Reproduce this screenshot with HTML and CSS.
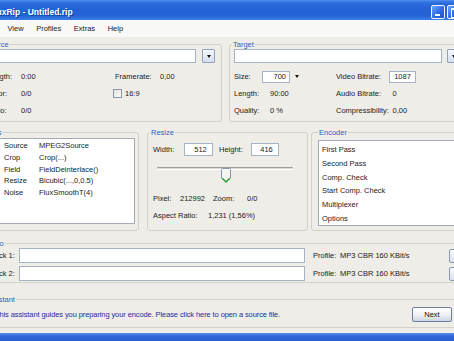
FILE: index.html
```html
<!DOCTYPE html>
<html>
<head>
<meta charset="utf-8">
<title>FluxRip - Untitled.rip</title>
<link rel="stylesheet" href="styles.css">
</head>
<body>
<div class="window">
  <div class="titlebar">
    <span class="title">FluxRip - Untitled.rip</span>
    <div class="caption-btns">
      <span class="cbtn cbtn-min"></span>
      <span class="cbtn cbtn-max"></span>
      <span class="cbtn cbtn-close"></span>
    </div>
  </div>
  <div class="menubar">
    <span class="menu">File</span>
    <span class="menu">View</span>
    <span class="menu">Profiles</span>
    <span class="menu">Extras</span>
    <span class="menu">Help</span>
  </div>
  <div class="client">
    <div class="row row-top">
      <fieldset class="group g-source">
        <legend class="lg-source">Source</legend>
        <div class="pathline">
          <input class="field f-path-src" type="text" value="" readonly>
          <span class="combo-btn"><i class="tri"></i></span>
        </div>
        <div class="info info-source">
          <span>Length:</span><span>0:00</span><span>Framerate:</span><span>0,00</span>
          <span>Color:</span><span>0/0</span><span class="chk-cell"><i class="chk"></i>16:9</span>
          <span>Ratio:</span><span>0/0</span><span></span><span></span>
        </div>
      </fieldset>
      <fieldset class="group g-target">
        <legend class="lg-target">Target</legend>
        <div class="pathline">
          <input class="field f-path-tgt" type="text" value="" readonly>
          <span class="combo-btn combo-tgt"><i class="tri"></i></span>
        </div>
        <div class="info info-target">
          <span>Size:</span><span class="size-cell"><input class="field f-size" type="text" value="700" readonly><i class="tri tri-loose"></i></span><span>Video Bitrate:</span><span><input class="field f-vbr" type="text" value="1087" readonly></span>
          <span>Length:</span><span class="v-pad">90:00</span><span>Audio Bitrate:</span><span class="v-pad2">0</span>
          <span>Quality:</span><span class="v-pad">0 %</span><span>Compressibility:</span><span class="v-pad2">0,00</span>
        </div>
      </fieldset>
    </div>

    <div class="row row-mid">
      <fieldset class="group g-filters">
        <legend class="lg-filters">Filters</legend>
        <div class="listbox filter-list">
          <span>Source</span><span>MPEG2Source</span>
          <span>Crop</span><span>Crop(...)</span>
          <span>Field</span><span>FieldDeinterlace()</span>
          <span>Resize</span><span>Bicubic(...,0,0.5)</span>
          <span>Noise</span><span>FluxSmoothT(4)</span>
        </div>
      </fieldset>
      <fieldset class="group g-resize">
        <legend class="lg-resize">Resize</legend>
        <div class="wh-row">
          <span class="wh-w">Width:</span>
          <input class="field f-w" type="text" value="512" readonly>
          <span class="wh-h">Height:</span>
          <input class="field f-h" type="text" value="416" readonly>
        </div>
        <div class="slider">
          <div class="track"></div>
          <svg class="thumb" width="10" height="15" viewBox="0 0 10 15">
            <path d="M0.5 1.5 Q0.5 0.5 1.5 0.5 H8.5 Q9.5 0.5 9.5 1.5 V10 L5 14.5 L0.5 10 Z" fill="#f3f3ef" stroke="#8796a8"/>
            <path d="M1.5 1.5 H8.5" stroke="#ffffff" stroke-width="1"/>
            <path d="M1.3 10.3 L5 13.8 L8.7 10.3" fill="none" stroke="#2ca42c" stroke-width="1.2"/>
          </svg>
        </div>
        <div class="stats">
          <div class="stat-row">
            <span class="s-pix">Pixel:</span><span class="s-pixv">212992</span><span class="s-zoom">Zoom:</span><span>0/0</span>
          </div>
          <div class="stat-row">
            <span class="s-ar">Aspect Ratio:</span><span>1,231 (1,56%)</span>
          </div>
        </div>
      </fieldset>
      <fieldset class="group g-encoder">
        <legend class="lg-encoder">Encoder</legend>
        <div class="listbox enc-list">
          <span>First Pass</span>
          <span>Second Pass</span>
          <span>Comp. Check</span>
          <span>Start Comp. Check</span>
          <span>Multiplexer</span>
          <span>Options</span>
        </div>
      </fieldset>
    </div>

    <fieldset class="group g-audio">
      <legend class="lg-audio">Audio</legend>
      <div class="track-row">
        <span class="t-label">Track 1:</span>
        <input class="field f-track" type="text" value="" readonly>
        <span class="t-prof">Profile:</span>
        <span class="t-profv">MP3 CBR 160 KBit/s</span>
        <span class="small-btn"></span>
      </div>
      <div class="track-row track-row2">
        <span class="t-label">Track 2:</span>
        <input class="field f-track" type="text" value="" readonly>
        <span class="t-prof">Profile:</span>
        <span class="t-profv">MP3 CBR 160 KBit/s</span>
        <span class="small-btn"></span>
      </div>
    </fieldset>

    <fieldset class="group g-assist">
      <legend class="lg-assist">Assistant</legend>
      <div class="assist-row">
        <span class="assist-text">This assistant guides you preparing your encode. Please click here to open a source file.</span>
        <span class="next-btn">Next</span>
      </div>
    </fieldset>
  </div>
  <div class="bottombar"></div>
</div>
</body>
</html>
```

FILE: styles.css
```css
* { box-sizing: border-box; }
html, body { margin: 0; padding: 0; }
body {
  width: 454px;
  height: 341px;
  overflow: hidden;
  background: #eeede8;
  font-family: "Liberation Sans", Arial, sans-serif;
  font-size: 7.5px;
  line-height: 1;
  color: #1b1b1b;
}
.window {
  width: 497px;
  height: 341px;
  margin-left: -24px;
  display: flex;
  flex-direction: column;
  overflow: hidden;
  background: #eeede8;
}

/* title bar */
.titlebar {
  flex: none;
  height: 20px;
  display: flex;
  align-items: flex-start;
  background: linear-gradient(#4f8ff2 0%, #2c6ddf 14%, #2360d5 50%, #2464d8 78%, #3b7ee6 100%);
}
.title {
  padding-left: 13px;
  padding-top: 1.5px;
  line-height: 20px;
  font-size: 8.5px;
  font-weight: bold;
  color: #fff;
  text-shadow: 1px 1px 0 #0d3d99;
}
.caption-btns {
  margin-left: auto;
  margin-right: -4px;
  margin-top: 5px;
  display: flex;
  gap: 2px;
}
.cbtn {
  position: relative;
  width: 14px;
  height: 14px;
  border: 1px solid #f2f6ff;
  border-radius: 2px;
  background: linear-gradient(135deg, #6aa4ff 0%, #2d6ae6 55%, #1c52c9 100%);
}
.cbtn-min::after {
  content: "";
  position: absolute;
  left: 3px;
  bottom: 2px;
  width: 5px;
  height: 2px;
  background: #fff;
}
.cbtn-max::after {
  content: "";
  position: absolute;
  left: 3px;
  top: 2px;
  width: 7px;
  height: 7px;
  border: 1px solid #fff;
  border-top-width: 2px;
}
.cbtn-close { background: linear-gradient(135deg, #f0a08a, #d9532c 60%, #c03d18); }

/* menu */
.menubar {
  flex: none;
  height: 17px;
  display: flex;
  padding-left: 0.5px;
  line-height: 17px;
  background: #f8f8f6;
  color: #222;
}
.menu { padding: 0 6.3px; }

/* client */
.client {
  flex: none;
  padding: 0 3px 0 2px;
}
.row { display: flex; }
.row-top { margin-top: 2.5px; }
.row-mid { margin-top: 5.5px; }

.group {
  margin: 0;
  min-width: 0;
  border: 1px solid #d2d2c9;
  border-radius: 3px;
}
legend {
  padding: 0 1px;
  line-height: 9px;
  color: #2f5ebf;
}

.field {
  display: block;
  margin: 0;
  padding: 0 2px;
  border: 1px solid #a6b3c2;
  background: #fff;
  font: inherit;
  color: inherit;
  text-align: center;
  outline: none;
}

.pathline { display: flex; height: 14px; }
.combo-btn {
  flex: none;
  width: 13px;
  height: 14px;
  margin-left: 6px;
  display: flex;
  align-items: center;
  justify-content: center;
  border: 1px solid #8ea2be;
  border-radius: 1px;
  background: linear-gradient(#f4f7fd, #d5deef);
}
.combo-tgt { margin-left: 5px; }
.tri {
  display: block;
  width: 0;
  height: 0;
  border-left: 2.5px solid transparent;
  border-right: 2.5px solid transparent;
  border-top: 3px solid #111;
}

/* source */
.g-source {
  flex: none;
  width: 244px;
  padding: 0.5px 6px 2px 5px;
}
.lg-source { margin-left: 0; }
.f-path-src { width: 212px; height: 14px; }
.info {
  display: grid;
  grid-auto-rows: 17px;
  align-items: center;
  margin-top: 5px;
}
.info-source {
  grid-template-columns: 34px 94px 45px auto;
  padding-left: 3px;
}
.chk-cell {
  display: flex;
  align-items: center;
  margin-left: -2px;
  grid-column: 3 / span 2;
}
.chk {
  display: block;
  width: 9px;
  height: 9px;
  margin-right: 3px;
  border: 1px solid #8797ad;
  background: linear-gradient(135deg, #e4e4de, #fbfbf9);
}

/* target */
.g-target {
  flex: 1;
  margin-left: 7px;
  padding: 0.5px 4px 2px 4px;
}
.lg-target { margin-left: -2px; }
.f-path-tgt { width: 208px; height: 14px; }
.info-target {
  grid-template-columns: 28px 74px 53px auto;
}
.size-cell { display: flex; align-items: center; }
.f-size { width: 28px; height: 12px; text-align: right; padding-right: 3px; }
.tri-loose { margin-left: 5px; }
.f-vbr { width: 27px; height: 12px; }
.v-pad { padding-left: 8px; }
.v-pad2 { padding-left: 3.5px; }

/* filters */
.g-filters {
  flex: none;
  width: 161px;
  padding: 1.5px 3px 6px 3px;
}
.lg-filters { margin-left: -2px; }
.listbox {
  background: #fff;
  border: 1px solid #a3aab5;
}
.filter-list {
  height: 86px;
  display: grid;
  grid-template-columns: 35px auto;
  grid-auto-rows: 11.7px;
  align-items: center;
  padding-top: 1.2px;
  padding-left: 21px;
}

/* resize */
.g-resize {
  flex: none;
  width: 161px;
  margin-left: 8px;
  padding: 6.5px 4px 6.25px 5px;
}
.lg-resize { margin-left: -3px; }
.wh-row { display: flex; align-items: center; height: 13px; }
.wh-w { width: 31px; }
.wh-h { width: 32px; margin-left: 6px; }
.f-w { width: 29px; height: 13px; padding-left: 6px; }
.f-h { width: 28px; height: 13px; padding-left: 5px; }
.slider {
  position: relative;
  width: 136px;
  height: 16px;
  margin-top: 11px;
  margin-left: 4px;
}
.track {
  margin-top: 7px;
  height: 3px;
  border-top: 1px solid #9e9d98;
  border-bottom: 1px solid #ffffff;
  border-radius: 1px;
  background: #dcdbd5;
}
.thumb {
  position: absolute;
  left: 64px;
  top: 1px;
}
.stats { margin-top: 7.75px; }
.stat-row {
  display: flex;
  align-items: center;
  height: 16.5px;
}
.s-pix { width: 27px; }
.s-pixv { width: 33px; }
.s-zoom { width: 34px; }
.s-ar { width: 55px; }

/* encoder */
.g-encoder {
  flex: 1;
  margin-left: 3px;
  padding: 3.5px 6px 4px 6px;
}
.lg-encoder { margin-left: 0; }
.enc-list {
  height: 86px;
  display: flex;
  flex-direction: column;
  padding-top: 2.3px;
  padding-left: 3px;
}
.enc-list span {
  height: 13.7px;
  line-height: 13.7px;
}

/* audio */
.g-audio {
  margin-top: 7.5px;
  padding: 0.5px 4px 1px 9px;
}
.lg-audio { margin-left: -4.5px; }
.track-row { display: flex; align-items: center; height: 15px; }
.track-row2 { margin-top: 3px; }
.t-label { width: 31px; flex: none; }
.f-track { width: 286px; height: 15px; flex: none; }
.t-prof { width: 27px; margin-left: 8px; flex: none; }
.t-profv { width: 109px; flex: none; }
.small-btn {
  flex: none;
  width: 14px;
  height: 14px;
  border: 1px solid #8a9ab2;
  border-radius: 2px;
  background: linear-gradient(#fbfbfd, #d9dfea);
}

/* assistant */
.g-assist {
  margin-top: 11.5px;
  padding: 3.5px 17px 5px 16px;
}
.lg-assist { margin-left: -11.5px; }
.assist-row { display: flex; align-items: center; height: 15px; }
.assist-text { color: #2a2a9e; white-space: nowrap; letter-spacing: -0.1px; }
.next-btn {
  margin-left: auto;
  width: 40px;
  height: 15px;
  line-height: 13px;
  text-align: center;
  border: 1px solid #6e7fa0;
  border-radius: 2px;
  background: linear-gradient(#ffffff 0%, #eef0f5 55%, #ccd3e2 100%);
  color: #111;
}

.bottombar {
  margin-top: auto;
  flex: none;
  height: 8px;
  background: linear-gradient(#5b8fe8, #2f66d8 40%, #2a5fd2);
}
```
